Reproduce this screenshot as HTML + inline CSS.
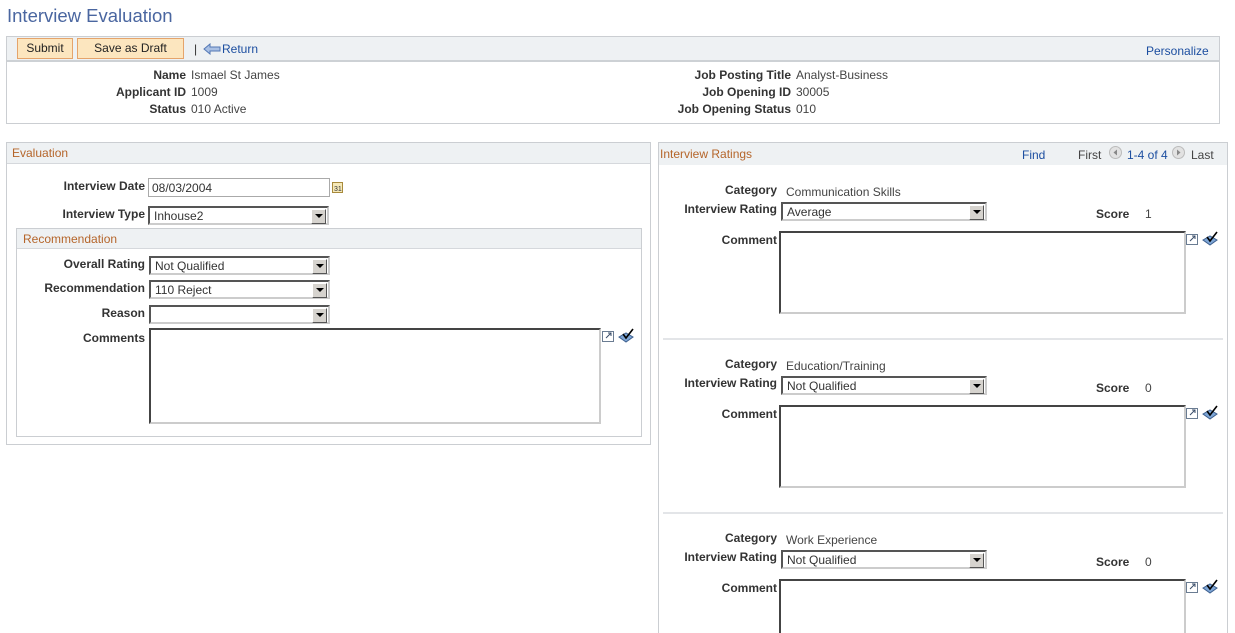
<!DOCTYPE html>
<html><head><meta charset="utf-8"><style>
*{box-sizing:border-box;margin:0;padding:0}
html,body{width:1235px;height:633px;overflow:hidden}
body{background:#fff;font-family:"Liberation Sans",Arial,sans-serif;font-size:12px;color:#333;position:relative}
.a{position:absolute;white-space:nowrap}
.lb{position:absolute;font-weight:bold;color:#333;text-align:right;white-space:nowrap}
.v{position:absolute;color:#444;white-space:nowrap}
.box{position:absolute;border:1px solid #cbced2}
.hd{position:absolute;background:#eef1f3;border-bottom:1px solid #d5d8dc}
.ht{position:absolute;color:#b5652a;font-size:12px;white-space:nowrap}
.sel{position:absolute;height:19px;border:2px solid;border-color:#555 #ccc #ccc #555;background:#fff;padding:1px 0 0 4px;color:#333;white-space:nowrap}
.sel:after{content:"";position:absolute;right:1px;top:1px;width:13px;height:13px;background:#d6d3ce;border:1px solid;border-color:#fff #555 #555 #fff}
.sel i{position:absolute;right:4px;top:6px;width:0;height:0;border-left:4px solid transparent;border-right:4px solid transparent;border-top:4px solid #000;z-index:2}
.ta{position:absolute;border:2px solid;border-color:#444 #ccc #ccc #444;background:#fff}
.lk{color:#1c4ea0}
.btn{position:absolute;top:38px;height:21px;background:#fce6bf;border:1px solid #e5a46b;text-align:center;line-height:19px;color:#222}
</style></head><body>
<div class="a" style="left:7px;top:5px;font-size:18.5px;color:#4a66a0">Interview Evaluation</div>

<div class="box" style="left:6px;top:36px;width:1214px;height:88px"></div>
<div class="a" style="left:7px;top:37px;width:1212px;height:25px;background:#eef1f3;border-bottom:2px solid #cdd1d5"></div>
<div class="btn" style="left:17px;width:56px">Submit</div>
<div class="btn" style="left:77px;width:107px">Save as Draft</div>
<div class="a" style="left:194px;top:42px;color:#333">|</div>
<svg class="a" style="left:203px;top:43px" width="18" height="12" viewBox="0 0 18 12"><path d="M1 6 L7 1 L7 4 L17 4 L17 8 L7 8 L7 11 Z" fill="#a9c0e4" stroke="#5277b5"/></svg>
<div class="a lk" style="left:222px;top:42px">Return</div>
<div class="a lk" style="left:1146px;top:44px">Personalize</div>

<div class="lb" style="right:1049px;top:68px">Name</div><div class="v" style="left:191px;top:68px">Ismael St James</div>
<div class="lb" style="right:1049px;top:85px">Applicant ID</div><div class="v" style="left:191px;top:85px">1009</div>
<div class="lb" style="right:1049px;top:102px">Status</div><div class="v" style="left:191px;top:102px">010 Active</div>
<div class="lb" style="right:444px;top:68px">Job Posting Title</div><div class="v" style="left:796px;top:68px">Analyst-Business</div>
<div class="lb" style="right:444px;top:85px">Job Opening ID</div><div class="v" style="left:796px;top:85px">30005</div>
<div class="lb" style="right:444px;top:102px">Job Opening Status</div><div class="v" style="left:796px;top:102px">010</div>

<div class="box" style="left:6px;top:142px;width:645px;height:303px"></div>
<div class="hd" style="left:7px;top:143px;width:643px;height:21px"></div>
<div class="ht" style="left:12px;top:146px">Evaluation</div>
<div class="lb" style="right:1090px;top:179px">Interview Date</div>
<div class="a" style="left:148px;top:178px;width:182px;height:19px;border:1px solid #aaa;padding:2px 0 0 3px;color:#333">08/03/2004</div>
<svg class="a" style="left:332px;top:181px" width="11" height="12" viewBox="0 0 11 12"><rect x="0.5" y="1.5" width="10" height="10" fill="#f6e9b8" stroke="#a88a3c"/><text x="2" y="10" font-size="7" font-family="Liberation Sans" fill="#333">31</text></svg>
<div class="lb" style="right:1090px;top:207px">Interview Type</div>
<div class="sel" style="left:148px;top:206px;width:181px">Inhouse2<i></i></div>

<div class="box" style="left:16px;top:228px;width:626px;height:209px"></div>
<div class="hd" style="left:17px;top:229px;width:624px;height:20px"></div>
<div class="ht" style="left:23px;top:232px">Recommendation</div>
<div class="lb" style="right:1090px;top:257px">Overall Rating</div>
<div class="sel" style="left:149px;top:256px;width:181px">Not Qualified<i></i></div>
<div class="lb" style="right:1090px;top:281px">Recommendation</div>
<div class="sel" style="left:149px;top:280px;width:181px">110 Reject<i></i></div>
<div class="lb" style="right:1090px;top:306px">Reason</div>
<div class="sel" style="left:149px;top:305px;width:181px"><i></i></div>
<div class="lb" style="right:1090px;top:331px">Comments</div>
<div class="ta" style="left:149px;top:328px;width:452px;height:96px"></div>
<svg class="a" style="left:602px;top:328px" width="34" height="16" viewBox="0 0 34 16"><rect x="0.5" y="3.5" width="11" height="10" fill="#fff" stroke="#6a7c92"/><path d="M4 10 L9 5 M6 5 H9 V8" stroke="#3a4e6a" fill="none"/><path d="M17 9 L24 5 L31 9 L24 14 Z" fill="#7ea6d6" stroke="#3d5f8e"/><path d="M21 6 L24 10 L31 1" stroke="#000" stroke-width="1.6" fill="none"/></svg>

<div class="box" style="left:658px;top:142px;width:570px;height:500px"></div>
<div class="hd" style="left:659px;top:143px;width:568px;height:22px;border-bottom:none"></div>
<div class="ht" style="left:660px;top:147px">Interview Ratings</div>
<div class="a lk" style="left:1022px;top:148px">Find</div>
<div class="a" style="left:1078px;top:148px;color:#444">First</div>
<svg class="a" style="left:1109px;top:146px" width="13" height="13"><circle cx="6.5" cy="6.5" r="6" fill="#e2e2e2" stroke="#bbb"/><path d="M8 3.5 L4.5 6.5 L8 9.5Z" fill="#888"/></svg>
<div class="a lk" style="left:1127px;top:148px">1-4 of 4</div>
<svg class="a" style="left:1172px;top:146px" width="13" height="13"><circle cx="6.5" cy="6.5" r="6" fill="#e2e2e2" stroke="#bbb"/><path d="M5 3.5 L8.5 6.5 L5 9.5Z" fill="#888"/></svg>
<div class="a" style="left:1191px;top:148px;color:#444">Last</div>

<div class="lb" style="right:458px;top:183px">Category</div><div class="v" style="left:786px;top:185px">Communication Skills</div>
<div class="lb" style="right:458px;top:202px">Interview Rating</div>
<div class="sel" style="left:781px;top:202px;width:206px">Average<i></i></div>
<div class="lb" style="left:1096px;top:207px">Score</div><div class="v" style="left:1145px;top:207px">1</div>
<div class="lb" style="right:458px;top:233px">Comment</div>
<div class="ta" style="left:779px;top:231px;width:407px;height:83px"></div>
<svg class="a" style="left:1186px;top:231px" width="34" height="16" viewBox="0 0 34 16"><rect x="0.5" y="3.5" width="11" height="10" fill="#fff" stroke="#6a7c92"/><path d="M4 10 L9 5 M6 5 H9 V8" stroke="#3a4e6a" fill="none"/><path d="M17 9 L24 5 L31 9 L24 14 Z" fill="#7ea6d6" stroke="#3d5f8e"/><path d="M21 6 L24 10 L31 1" stroke="#000" stroke-width="1.6" fill="none"/></svg>
<div class="a" style="left:663px;top:338px;width:560px;height:2px;background:#e3e5e8"></div>

<div class="lb" style="right:458px;top:357px">Category</div><div class="v" style="left:786px;top:359px">Education/Training</div>
<div class="lb" style="right:458px;top:376px">Interview Rating</div>
<div class="sel" style="left:781px;top:376px;width:206px">Not Qualified<i></i></div>
<div class="lb" style="left:1096px;top:381px">Score</div><div class="v" style="left:1145px;top:381px">0</div>
<div class="lb" style="right:458px;top:407px">Comment</div>
<div class="ta" style="left:779px;top:405px;width:407px;height:83px"></div>
<svg class="a" style="left:1186px;top:405px" width="34" height="16" viewBox="0 0 34 16"><rect x="0.5" y="3.5" width="11" height="10" fill="#fff" stroke="#6a7c92"/><path d="M4 10 L9 5 M6 5 H9 V8" stroke="#3a4e6a" fill="none"/><path d="M17 9 L24 5 L31 9 L24 14 Z" fill="#7ea6d6" stroke="#3d5f8e"/><path d="M21 6 L24 10 L31 1" stroke="#000" stroke-width="1.6" fill="none"/></svg>
<div class="a" style="left:663px;top:512px;width:560px;height:2px;background:#e3e5e8"></div>

<div class="lb" style="right:458px;top:531px">Category</div><div class="v" style="left:786px;top:533px">Work Experience</div>
<div class="lb" style="right:458px;top:550px">Interview Rating</div>
<div class="sel" style="left:781px;top:550px;width:206px">Not Qualified<i></i></div>
<div class="lb" style="left:1096px;top:555px">Score</div><div class="v" style="left:1145px;top:555px">0</div>
<div class="lb" style="right:458px;top:581px">Comment</div>
<div class="ta" style="left:779px;top:579px;width:407px;height:83px"></div>
<svg class="a" style="left:1186px;top:579px" width="34" height="16" viewBox="0 0 34 16"><rect x="0.5" y="3.5" width="11" height="10" fill="#fff" stroke="#6a7c92"/><path d="M4 10 L9 5 M6 5 H9 V8" stroke="#3a4e6a" fill="none"/><path d="M17 9 L24 5 L31 9 L24 14 Z" fill="#7ea6d6" stroke="#3d5f8e"/><path d="M21 6 L24 10 L31 1" stroke="#000" stroke-width="1.6" fill="none"/></svg>
</body></html>
